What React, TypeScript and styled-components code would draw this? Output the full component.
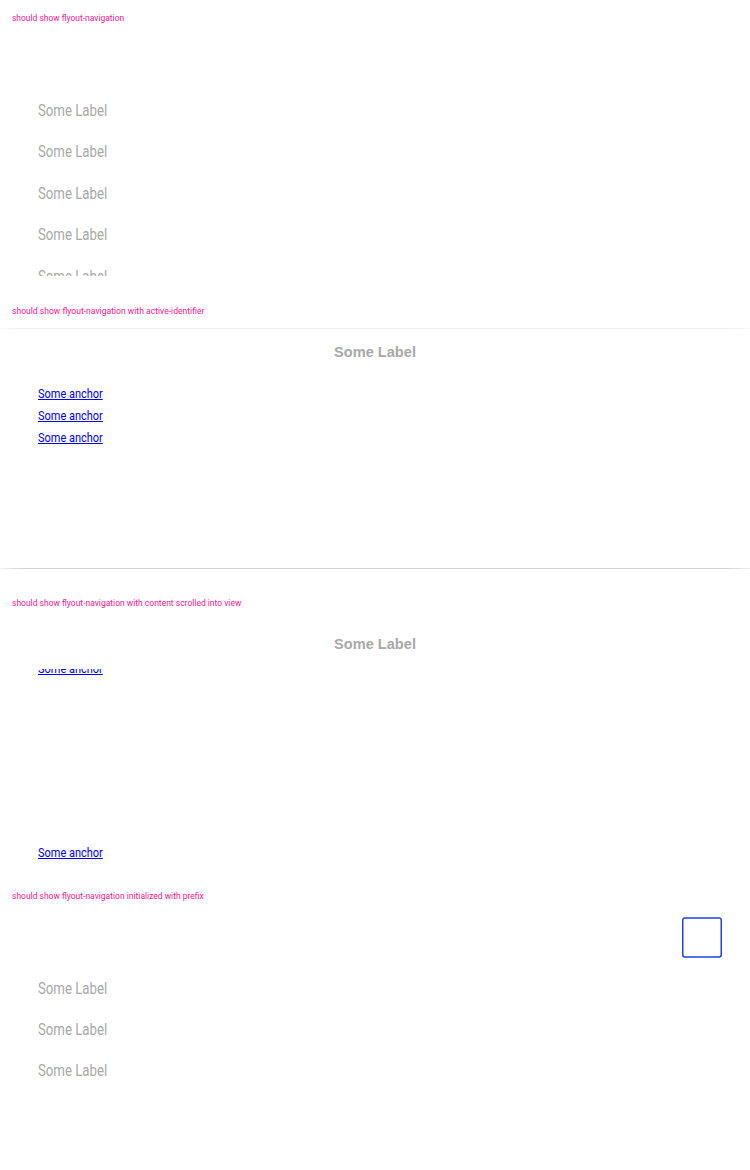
import React from 'react';
import styled, { createGlobalStyle } from 'styled-components';

const GlobalStyle = createGlobalStyle`
  * { box-sizing: border-box; }
  body { margin: 0; background: #fff; overflow: hidden; font-family: Roboto, 'Liberation Sans', sans-serif; }
`;

const Page = styled.main`
  width: 750px;
  height: 1170px;
  overflow: hidden;
`;

const Example = styled.section`
  height: 292.5px;
`;

const Title = styled.h2`
  height: 36px;
  margin: 0;
  padding-left: 12px;
  font-size: 9px;
  font-weight: 400;
  line-height: 36px;
  color: #ff1493;
`;

const Fit = styled.span<{ $scale: number; $underline?: boolean }>`
  display: inline-block;
  white-space: nowrap;
  transform: scaleX(${(p) => p.$scale});
  transform-origin: 0 50%;
  ${(p) => p.$underline && 'text-decoration: underline 1px; text-underline-offset: 1px; text-decoration-skip-ink: none;'}
`;

const Stage = styled.div<{ $lined?: boolean }>`
  display: flex;
  flex-direction: column;
  height: 240px;
  overflow: hidden;
  ${(p) =>
    p.$lined &&
    `height: 240.5px;
    margin-top: -0.5px;
    background:
      linear-gradient(90deg, #fafafa, #ededed 24px, #ededed 726px, #fafafa) 0 0 / 100% 1px no-repeat,
      linear-gradient(90deg, #eee, #d2d2d2 24px, #d2d2d2 726px, #eee) 0 100% / 100% 1px no-repeat;`}
`;

const TopBar = styled.div`
  display: flex;
  flex: none;
  justify-content: flex-end;
  height: 54.1px;
  padding: 3px 27px 0 0;
`;

const ItemList = styled.div`
  display: flex;
  flex: none;
  flex-direction: column;
  padding-left: 38px;
`;

const Item = styled.div`
  height: 41.4px;
  font-size: 16px;
  line-height: 41.4px;
  color: #a8a8a8;
`;

const Header = styled.div<{ $tall?: boolean }>`
  flex: none;
  height: 48px;
  font: 700 14.6px 'Liberation Sans', Arial, sans-serif;
  line-height: ${(p) => (p.$tall ? 48.2 : 47)}px;
  text-align: center;
  color: #a8a8a8;
`;

const Scroller = styled.div`
  flex: 1;
  min-height: 0;
  overflow: hidden;
`;

const AnchorList = styled.div<{ $shift: number }>`
  display: flex;
  flex-direction: column;
  margin-top: ${(p) => p.$shift}px;
  padding-left: 38px;
`;

const Anchor = styled.a<{ $gap?: number }>`
  height: 22.3px;
  margin-top: ${(p) => p.$gap ?? 0}px;
  font-size: 13px;
  line-height: 22.3px;
  color: #0000ee;
  text-decoration: none;
`;

const FocusFrame = () => (
  <svg width="42" height="42" viewBox="0 0 42 42" fill="none" aria-hidden="true">
    <rect x="1.75" y="1" width="38.5" height="39" rx="2.2" stroke="#1a44ea" strokeWidth="1.5" />
  </svg>
);

const Items = ({ count, focused }: { count: number; focused?: boolean }) => (
  <Stage>
    <TopBar>{focused && <FocusFrame />}</TopBar>
    <ItemList>
      {Array.from({ length: count }, (_, i) => (
        <Item key={i}><Fit $scale={0.825}>Some Label</Fit></Item>
      ))}
    </ItemList>
  </Stage>
);

const AnchorText = () => <Fit $scale={0.845} $underline>Some anchor</Fit>;

export default function App() {
  return (
    <Page>
      <GlobalStyle />
      <Example>
        <Title><Fit $scale={0.94}>should show flyout-navigation</Fit></Title>
        <Items count={5} />
      </Example>
      <Example>
        <Title><Fit $scale={0.953}>should show flyout-navigation with active-identifier</Fit></Title>
        <Stage $lined>
          <Header $tall>Some Label</Header>
          <Scroller>
            <AnchorList $shift={6.9}>
              <Anchor href="#"><AnchorText /></Anchor>
              <Anchor href="#"><AnchorText /></Anchor>
              <Anchor href="#"><AnchorText /></Anchor>
            </AnchorList>
          </Scroller>
        </Stage>
      </Example>
      <Example>
        <Title><Fit $scale={0.945}>should show flyout-navigation with content scrolled into view</Fit></Title>
        <Stage>
          <Header>Some Label</Header>
          <Scroller>
            <AnchorList $shift={-11}>
              <Anchor href="#"><AnchorText /></Anchor>
              <Anchor href="#" $gap={161.8}><AnchorText /></Anchor>
            </AnchorList>
          </Scroller>
        </Stage>
      </Example>
      <Example>
        <Title><Fit $scale={0.944}>should show flyout-navigation initialized with prefix</Fit></Title>
        <Items count={3} focused />
      </Example>
    </Page>
  );
}
